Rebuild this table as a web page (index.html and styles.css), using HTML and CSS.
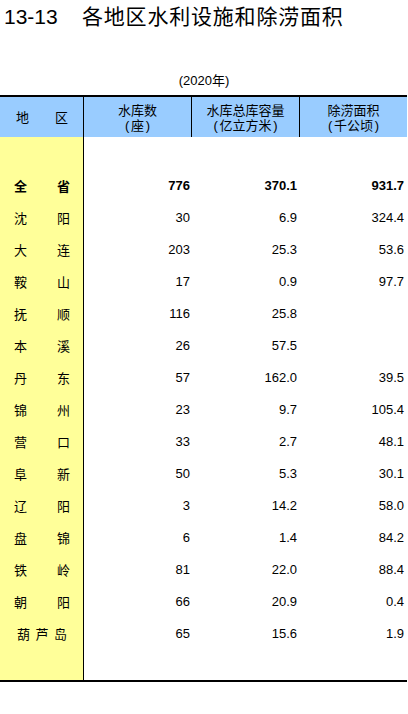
FILE: index.html
```html
<!DOCTYPE html>
<html lang="zh">
<head>
<meta charset="utf-8">
<link rel="stylesheet" href="styles.css">
</head>
<body>
<div class="page">
  <h1 class="title"><span class="num">13-13</span><span class="name">各地区水利设施和除涝面积</span></h1>
  <div class="year">(2020年)</div>
  <div class="table">
    <div class="head">
      <div class="hcell region"><span>地</span><span>区</span></div>
      <div class="hcell"><span class="hl">水库数</span><span class="hl"><span class="pl">(</span>座<span class="pr">)</span></span></div>
      <div class="hcell"><span class="hl">水库总库容量</span><span class="hl"><span class="pl">(</span>亿立方米<span class="pr">)</span></span></div>
      <div class="hcell last"><span class="hl">除涝面积</span><span class="hl"><span class="pl">(</span>千公顷<span class="pr">)</span></span></div>
    </div>
    <div class="body">
      <div class="row blank top"><div class="lab"></div><div></div><div></div><div></div></div>
      <div class="row total"><div class="lab"><span>全</span><span>省</span></div><div class="n">776</div><div class="n">370.1</div><div class="n">931.7</div></div>
      <div class="row"><div class="lab"><span>沈</span><span>阳</span></div><div class="n">30</div><div class="n">6.9</div><div class="n">324.4</div></div>
      <div class="row"><div class="lab"><span>大</span><span>连</span></div><div class="n">203</div><div class="n">25.3</div><div class="n">53.6</div></div>
      <div class="row"><div class="lab"><span>鞍</span><span>山</span></div><div class="n">17</div><div class="n">0.9</div><div class="n">97.7</div></div>
      <div class="row"><div class="lab"><span>抚</span><span>顺</span></div><div class="n">116</div><div class="n">25.8</div><div class="n"></div></div>
      <div class="row"><div class="lab"><span>本</span><span>溪</span></div><div class="n">26</div><div class="n">57.5</div><div class="n"></div></div>
      <div class="row"><div class="lab"><span>丹</span><span>东</span></div><div class="n">57</div><div class="n">162.0</div><div class="n">39.5</div></div>
      <div class="row"><div class="lab"><span>锦</span><span>州</span></div><div class="n">23</div><div class="n">9.7</div><div class="n">105.4</div></div>
      <div class="row"><div class="lab"><span>营</span><span>口</span></div><div class="n">33</div><div class="n">2.7</div><div class="n">48.1</div></div>
      <div class="row"><div class="lab"><span>阜</span><span>新</span></div><div class="n">50</div><div class="n">5.3</div><div class="n">30.1</div></div>
      <div class="row"><div class="lab"><span>辽</span><span>阳</span></div><div class="n">3</div><div class="n">14.2</div><div class="n">58.0</div></div>
      <div class="row"><div class="lab"><span>盘</span><span>锦</span></div><div class="n">6</div><div class="n">1.4</div><div class="n">84.2</div></div>
      <div class="row"><div class="lab"><span>铁</span><span>岭</span></div><div class="n">81</div><div class="n">22.0</div><div class="n">88.4</div></div>
      <div class="row"><div class="lab"><span>朝</span><span>阳</span></div><div class="n">66</div><div class="n">20.9</div><div class="n">0.4</div></div>
      <div class="row"><div class="lab three"><span>葫</span><span>芦</span><span>岛</span></div><div class="n">65</div><div class="n">15.6</div><div class="n">1.9</div></div>
      <div class="row blank bottom"><div class="lab"></div><div></div><div></div><div></div></div>
    </div>
  </div>
</div>
</body>
</html>
```

FILE: styles.css
```css
html, body {
  margin: 0;
  padding: 0;
  background: #ffffff;
}

body {
  font-family: "Liberation Sans", "Noto Sans CJK SC", sans-serif;
  color: #000000;
}

.page {
  width: 408px;
}

.title {
  margin: 0;
  height: 34px;
  line-height: 34px;
  padding-left: 4px;
  font-size: 21px;
  font-weight: normal;
  display: flex;
  white-space: nowrap;
}

.title .num {
  width: 78px;
}

.title .name {
  letter-spacing: 0.8px;
}

.year {
  margin-top: 38px;
  height: 18px;
  line-height: 18px;
  text-align: center;
  font-size: 13px;
  margin-bottom: 5px;
}

.table {
  width: 407px;
  border-top: 2px solid #000;
  border-bottom: 2px solid #000;
}

.head {
  display: grid;
  grid-template-columns: 84px 108px 108px 107px;
  background: #99ccff;
  height: 40px;
}

.hcell {
  border-right: 1px solid #000;
  display: flex;
  flex-direction: column;
  align-items: center;
  justify-content: center;
  text-align: center;
  font-size: 13px;
  line-height: 15px;
  padding-top: 1px;
}

.hl {
  display: block;
  height: 15px;
  white-space: nowrap;
}

.pl,
.pr {
  display: inline-block;
  width: 6px;
}

.pl {
  text-align: left;
}

.pr {
  text-align: right;
}

.hcell.last {
  border-right: none;
}

.hcell.region {
  flex-direction: row;
  justify-content: space-between;
  padding: 0 15px 0 16px;
}

.body {
  display: flex;
  flex-direction: column;
}

.row {
  display: grid;
  grid-template-columns: 84px 108px 108px 107px;
  height: 32px;
  font-size: 13px;
}

.row.bottom {
  height: 31px;
}

.lab {
  background: #ffff99;
  border-right: 1px solid #000;
  display: flex;
  align-items: center;
  justify-content: space-between;
  padding: 0 13px 0 14px;
}

.lab.three {
  padding: 0 16px 0 17px;
}

.n {
  display: flex;
  align-items: center;
  justify-content: flex-end;
  padding-right: 3px;
  font-family: "Liberation Sans", sans-serif;
}

.row > div:nth-child(2).n {
  padding-right: 2px;
}

.total {
  font-weight: bold;
}
```
